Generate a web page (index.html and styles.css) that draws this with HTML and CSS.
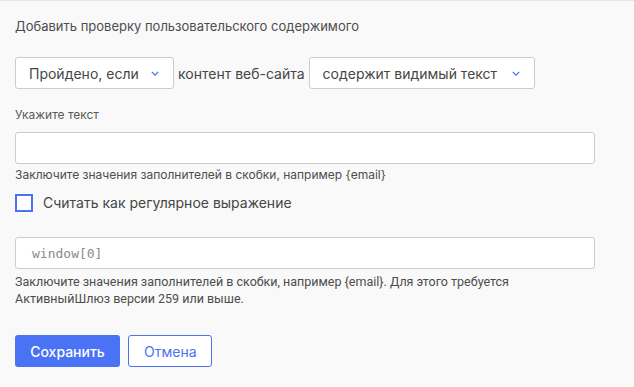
FILE: index.html
```html
<!doctype html>
<html lang="ru">

<head>
    <meta charset="utf-8">
    <meta name="viewport" content="width=device-width, initial-scale=1.0">
    <title>Проверка содержимого</title>
    <link rel="stylesheet" href="styles.css">
</head>

<body>
    <div class="panel">
        <div class="title">Добавить проверку пользовательского содержимого</div>

        <!-- condition row -->
        <div class="cond-row">
            <div class="select select-pass">
                <span>Пройдено, если</span>
                <svg class="chevron" viewBox="0 0 10 6"><path d="M1 1l4 4 4-4" /></svg>
            </div>
            <span class="cond-text">контент веб-сайта</span>
            <div class="select select-mode">
                <span>содержит видимый текст</span>
                <svg class="chevron" viewBox="0 0 10 6"><path d="M1 1l4 4 4-4" /></svg>
            </div>
        </div>

        <div class="field">
            <label class="label">Укажите текст</label>
            <div class="input"></div>
            <div class="hint">Заключите значения заполнителей в скобки, например {email}</div>
        </div>

        <label class="check">
            <span class="check-box"></span>
            <span>Считать как регулярное выражение</span>
        </label>

        <div class="field field-frame">
            <div class="input input-code">window[0]</div>
            <div class="hint hint-narrow">Заключите значения заполнителей в скобки, например {email}. Для этого требуется<br>АктивныйШлюз версии 259 или выше.</div>
        </div>

        <div class="actions">
            <button class="btn btn-primary">Сохранить</button>
            <button class="btn btn-outline">Отмена</button>
        </div>
    </div>
</body>

</html>
```

FILE: styles.css
```css
/* base styles */

body {
    margin: 0;
    background: #f9f9f9;
    font-family: Inter, "Noto Sans", sans-serif;
    color: #454646;
}

.panel {
    border-top: 1px solid #e6e6e6;
    padding: 16px 15px 0 15px;
}

.title {
    font-size: 13px;
    line-height: 18px;
    color: #4d4d4d;
}

/* condition row */
.cond-row {
    display: flex;
    align-items: center;
    gap: 4px;
    margin-top: 22px;
}

.select {
    display: flex;
    align-items: center;
    justify-content: space-between;
    box-sizing: border-box;
    height: 32px;
    padding: 0 14px 0 13px;
    background: #fff;
    border: 1px solid #ccc;
    border-radius: 3px;
    font-size: 14px;
    color: #454646;
}

.select-pass {
    width: 159px;
}

.select-mode {
    width: 226px;
}

.chevron {
    width: 8px;
    height: 5px;
    fill: none;
    stroke: #4a72f5;
    stroke-width: 1.6;
}

.cond-text {
    font-size: 14px;
    color: #454646;
}

/* text fields */
.field {
    margin-top: 18px;
}

.label {
    display: block;
    font-size: 12px;
    line-height: 16px;
    color: #5a5a5a;
}

.input {
    box-sizing: border-box;
    width: 580px;
    height: 32px;
    margin-top: 9px;
    background: #fff;
    border: 1px solid #ccc;
    border-radius: 3px;
}

.hint {
    font-size: 12px;
    line-height: 16px;
    margin-top: 3px;
    color: #4d4d4d;
}

.input-code {
    display: flex;
    align-items: center;
    padding-left: 16px;
    font-family: "DejaVu Sans Mono", monospace;
    font-size: 13px;
    color: #8a8a8a;
}

.field-frame {
    margin-top: 25px;
}

.field-frame .input {
    margin-top: 0;
}

.hint-narrow {
    font-family: Roboto, sans-serif;
    font-size: 12.5px;
    line-height: 17px;
    margin-top: 4px;
}

/* checkbox */
.check {
    display: flex;
    align-items: center;
    gap: 10px;
    margin-top: 11px;
    font-size: 14px;
    line-height: 18px;
    color: #454646;
}

.check-box {
    box-sizing: border-box;
    width: 18px;
    height: 18px;
    border: 2px solid #4a72f5;
    background: #fff;
}

/* buttons */
.actions {
    display: flex;
    gap: 8px;
    margin-top: 28px;
}

.btn {
    height: 32px;
    border-radius: 3px;
    font-family: Inter, sans-serif;
    font-size: 14px;
    font-weight: 500;
    padding: 0 15px;
}

.btn-primary {
    width: 105px;
    background: #4a72f5;
    border: none;
    color: #fff;
}

.btn-outline {
    width: 84px;
    background: #fff;
    border: 1px solid #4a72f5;
    color: #4a72f5;
    font-weight: 400;
}
```
